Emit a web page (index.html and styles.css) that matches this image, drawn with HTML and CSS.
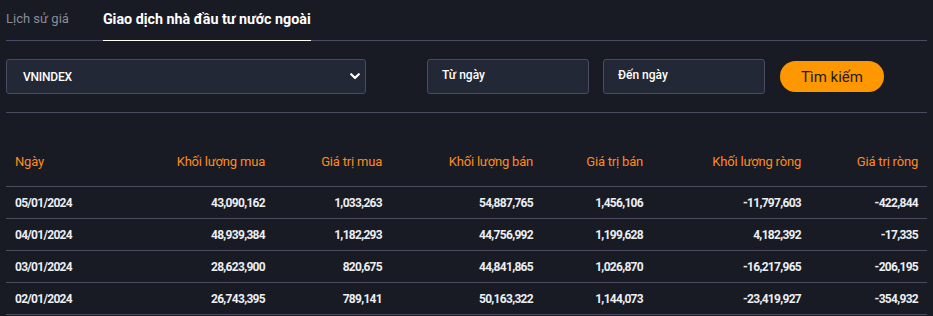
FILE: index.html
```html
<!DOCTYPE html>
<html lang="vi">
<head>
<meta charset="utf-8">
<title>Giao dịch nhà đầu tư nước ngoài</title>
<link rel="stylesheet" href="styles.css">
</head>
<body>
<div class="page">
  <div class="tabs">
    <div class="tab">Lịch sử giá</div>
    <div class="tab active">Giao dịch nhà đầu tư nước ngoài</div>
  </div>
  <div class="filters">
    <div class="select">
      <span>VNINDEX</span>
      <svg class="chev" width="10" height="7" viewBox="0 0 10 7"><path d="M1.2 1.2 L5 5 L8.8 1.2" fill="none" stroke="#fff" stroke-width="2.2" stroke-linecap="round" stroke-linejoin="round"/></svg>
    </div>
    <div class="dates">
      <div class="input">Từ ngày</div>
      <div class="input">Đến ngày</div>
      <button class="btn">Tìm kiếm</button>
    </div>
  </div>
  <div class="divider"></div>
  <table class="grid">
    <colgroup>
      <col class="c1"><col class="c2"><col class="c3"><col class="c4"><col class="c5"><col class="c6"><col class="c7">
    </colgroup>
    <thead>
      <tr>
        <th class="left">Ngày</th>
        <th>Khối lượng mua</th>
        <th>Giá trị mua</th>
        <th>Khối lượng bán</th>
        <th>Giá trị bán</th>
        <th>Khối lượng ròng</th>
        <th>Giá trị ròng</th>
      </tr>
    </thead>
    <tbody>
      <tr><td class="left">05/01/2024</td><td>43,090,162</td><td>1,033,263</td><td>54,887,765</td><td>1,456,106</td><td>-11,797,603</td><td>-422,844</td></tr>
      <tr><td class="left">04/01/2024</td><td>48,939,384</td><td>1,182,293</td><td>44,756,992</td><td>1,199,628</td><td>4,182,392</td><td>-17,335</td></tr>
      <tr><td class="left">03/01/2024</td><td>28,623,900</td><td>820,675</td><td>44,841,865</td><td>1,026,870</td><td>-16,217,965</td><td>-206,195</td></tr>
      <tr><td class="left">02/01/2024</td><td>26,743,395</td><td>789,141</td><td>50,163,322</td><td>1,144,073</td><td>-23,419,927</td><td>-354,932</td></tr>
    </tbody>
  </table>
</div>
</body>
</html>
```
FILE: styles.css
```css
* { box-sizing: border-box; }
html, body {
  margin: 0;
  padding: 0;
  background: #181b24;
  font-family: Roboto, "Noto Sans", sans-serif;
  color: #fff;
}
.page {
  padding: 0 6px;
  width: 933px;
}
.tabs {
  display: flex;
  gap: 34px;
  border-bottom: 1px solid #4c4a66;
  height: 41px;
}
.tab {
  font-size: 13px;
  color: #8a8d97;
  line-height: 38px;
  height: 41px;
}
.tab.active {
  color: #fff;
  font-weight: 700;
  font-size: 14.3px;
  border-bottom: 1px solid #fff;
}
.filters {
  display: flex;
  align-items: center;
  margin-top: 18px;
  height: 35px;
}
.select {
  width: 360px;
  height: 35px;
  background: #222836;
  border: 1px solid #4c4a66;
  border-radius: 3px;
  display: flex;
  align-items: center;
  justify-content: space-between;
  padding: 0 5px 0 16px;
  font-size: 12px;
  font-weight: 500;
  letter-spacing: -0.2px;
}
.chev { display: block; }
.dates {
  display: flex;
  align-items: center;
  margin-left: 61px;
  gap: 14px;
}
.input {
  width: 162px;
  height: 35px;
  background: #222836;
  border: 1px solid #4c4a66;
  border-radius: 3px;
  padding: 0 14px;
  display: flex;
  align-items: center;
  font-size: 12px;
  font-weight: 500;
  padding-bottom: 3px;
}
.btn {
  margin-left: 1px;
  width: 104px;
  height: 31px;
  border: none;
  border-radius: 16px;
  background: #ff9800;
  color: #1b1b1b;
  font-family: Roboto, "Noto Sans", sans-serif;
  font-size: 15px;
  padding: 0;
}
.divider {
  margin-top: 18px;
  border-top: 1px solid #4c4a5e;
}
.grid {
  width: 921px;
  table-layout: fixed;
  border-collapse: collapse;
  margin-top: 20px;
}
.c1 { width: 124px; }
.c2 { width: 144px; }
.c3 { width: 117px; }
.c4 { width: 151px; }
.c5 { width: 110px; }
.c6 { width: 158px; }
.c7 { width: 117px; }
.grid th {
  color: #ff8a1c;
  font-weight: 400;
  font-size: 13px;
  letter-spacing: -0.2px;
  text-align: right;
  padding: 4px 9px 0;
  height: 53px;
  border-bottom: 1px solid #4c4a5e;
}
.grid td {
  font-size: 12px;
  font-weight: 700;
  letter-spacing: -0.7px;
  color: #eceef2;
  text-align: right;
  padding: 1px 9px 0;
  height: 32px;
  border-bottom: 1px solid #4c4a5e;
}
.grid .left { text-align: left; }
```
